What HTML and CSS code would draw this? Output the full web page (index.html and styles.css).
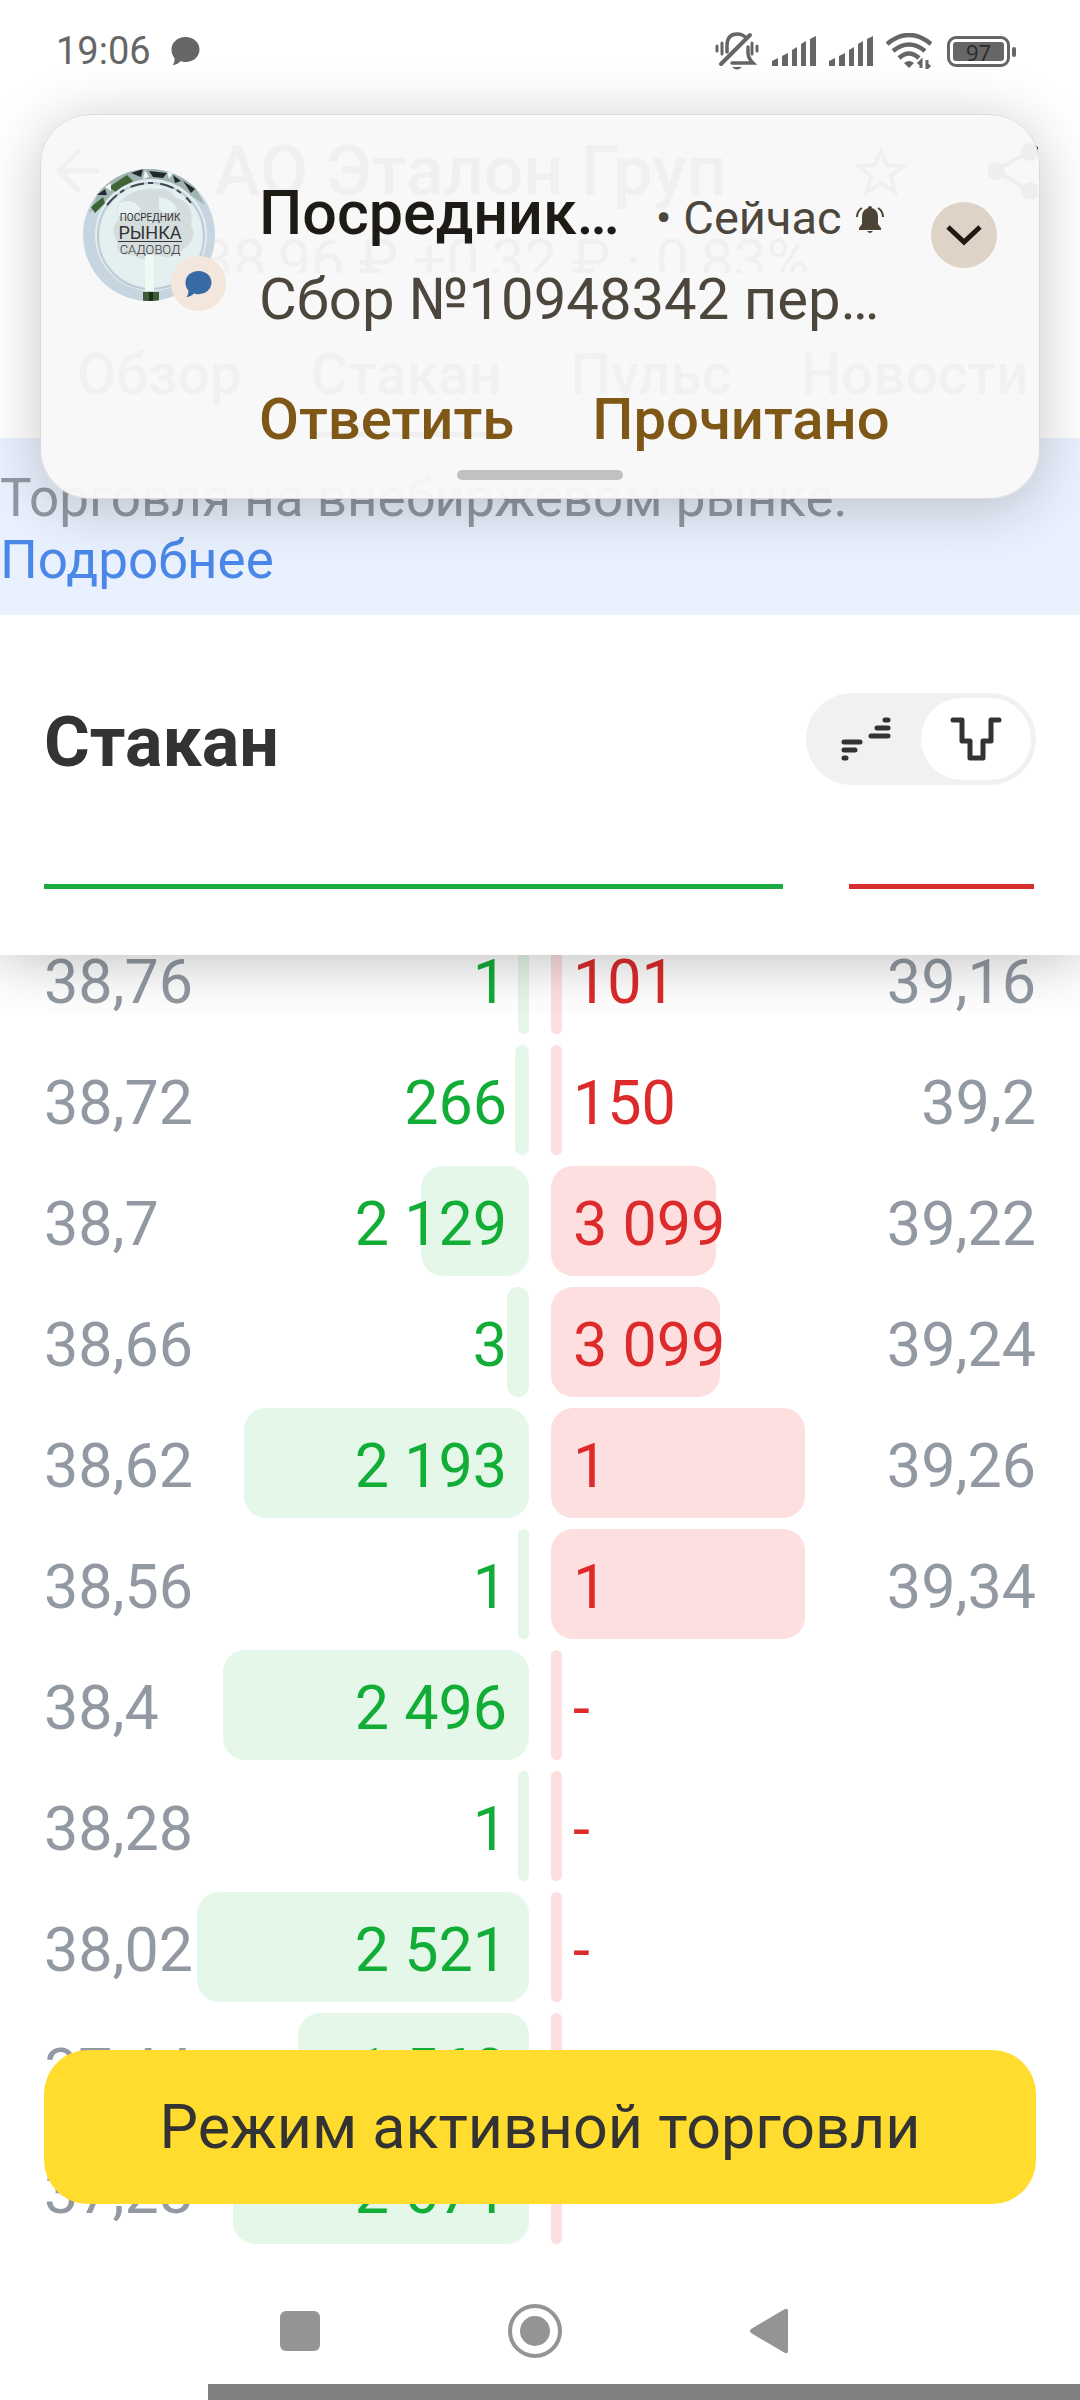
FILE: index.html
```html
<!DOCTYPE html>
<html lang="ru">
<head>
    <meta charset="UTF-8">
    <meta name="viewport" content="width=device-width, initial-scale=1.0">
    <title>Стакан</title>
    <link rel="stylesheet" href="styles.css">
</head>
<body>
    <div class="status-bar">
        <div class="status-left">
            <span>19:06</span>
            <svg width="29" height="28" viewBox="0 0 29 28"><path fill="#666" d="M14.5 0C22.5 0 28.5 5.5 28.5 12.5S22.5 25 14.5 25C12.5 25 11 24.8 9.5 24.2C7.5 26.5 4.5 28 1.5 28C3.2 26 3.8 24 3.5 21C1.5 19 .5 16 .5 12.5C.5 5.5 6.5 0 14.5 0Z"/></svg>
        </div>
        <div class="status-right">
            <svg width="44" height="39" viewBox="0 0 44 39" fill="none" stroke="#666" stroke-width="3.5" stroke-linecap="round">
                <path d="M12 20V14Q12 2 22 2Q28 2 31 6M33 15V21Q33 26 38 31H17"/>
                <path d="M6 32L35 3" stroke-width="4"/>
                <path d="M2 14V19M7 11V22M37 11V22M42 14V19" stroke-width="3"/>
                <path d="M17 35Q22 40 27 35Z" fill="#666" stroke="none"/>
            </svg>
            <svg width="44" height="30" viewBox="0 0 44 30" fill="#666"><path d="M0 25L6 22V30H0ZM10 20L16 17V30H10ZM20 14L25 11V30H20ZM29 8L34 5V30H29ZM38 3L44 0V30H38Z"/></svg>
            <svg width="44" height="30" viewBox="0 0 44 30" fill="#666"><path d="M0 25L6 22V30H0ZM10 20L16 17V30H10ZM20 14L25 11V30H20ZM29 8L34 5V30H29ZM38 3L44 0V30H38Z"/></svg>
            <svg width="46" height="36" viewBox="0 0 46 36" fill="none" stroke="#666" stroke-width="4.5">
                <path d="M1 11Q23 -7 45 11M7 18Q23 5 39 18M13 25Q23 16 33 25"/>
                <path d="M18 30Q23 26 28 30L23 35Z" fill="#666" stroke="none"/>
                <path d="M35 35V28L32 31M41 27V35L44 32" stroke-width="3"/>
            </svg>
            <div class="battery"><span>97</span></div>
        </div>
    </div>

    <header class="app-header">
        <div class="title-row">
            <svg width="44" height="44" viewBox="0 0 44 44" fill="none" stroke="#333" stroke-width="5" stroke-linecap="round" stroke-linejoin="round"><path d="M41 22H3M22 3L3 22L22 41"/></svg>
            <h1>АО Эталон Груп</h1>
            <svg class="star" width="54" height="50" viewBox="0 0 54 50" fill="none" stroke="#333" stroke-width="4"><path d="M27 5L33 19L49 20L37 30L41 46L27 37L13 46L17 30L5 20L21 19Z"/></svg>
            <svg width="50" height="56" viewBox="0 0 50 56" fill="#111" stroke="#111" stroke-width="4"><path d="M42 8L8 28L42 48" fill="none"/><circle cx="42" cy="9" r="7"/><circle cx="8" cy="28" r="7"/><circle cx="42" cy="48" r="7"/></svg>
        </div>
        <div class="quote">38,96 ₽ +0,32 ₽ · 0,83%</div>
        <nav class="tabs">
            <a href="#">Обзор</a>
            <a href="#" class="active">Стакан</a>
            <a href="#">Пульс</a>
            <a href="#">Новости</a>
        </nav>
    </header>

    <div class="banner">
        Торговля на внебиржевом рынке.<br>
        <a href="#">Подробнее</a>
    </div>

    <section class="book-header">
        <div class="book-title">
            <h2>Стакан</h2>
            <div class="switch">
                <button aria-label="Список">
                    <svg width="50" height="44" viewBox="0 0 50 44" fill="none" stroke="#333" stroke-width="5" stroke-linecap="round"><path d="M44 3H47M36 11H47M30 19H47M3 25H19M3 33H14M3 41H5"/></svg>
                </button>
                <button class="selected" aria-label="Стакан">
                    <svg width="52" height="44" viewBox="0 0 52 44" fill="none" stroke="#333" stroke-width="5" stroke-linecap="round" stroke-linejoin="round"><path d="M3 3H12V24H20V41H33V24H41V3H49"/></svg>
                </button>
            </div>
        </div>
        <div class="ratio">
            <div class="buy"></div>
            <div class="sell"></div>
        </div>
    </section>

    <main class="book">
        <table>
            <tbody id="levels"></tbody>
        </table>
        <div class="action">
            <button>Режим активной торговли</button>
        </div>
    </main>

    <footer class="nav-bar">
        <button aria-label="Недавние"><svg width="40" height="40" viewBox="0 0 40 40"><rect width="40" height="40" rx="6" fill="#949494"/></svg></button>
        <button aria-label="Домой"><svg width="54" height="54" viewBox="0 0 54 54"><circle cx="27" cy="27" r="25" fill="none" stroke="#949494" stroke-width="4"/><circle cx="27" cy="27" r="15" fill="#949494"/></svg></button>
        <button aria-label="Назад"><svg width="38" height="46" viewBox="0 0 38 46"><path d="M35 1Q38 0 38 3V43Q38 46 35 45L1 25Q-1 23 1 21Z" fill="#949494"/></svg></button>
    </footer>
    <div class="bottom-strip"></div>

    <div class="notification">
        <div class="avatar">
            <svg width="132" height="132" viewBox="0 0 132 132">
                <defs><clipPath id="round"><circle cx="66" cy="66" r="66"/></clipPath></defs>
                <g clip-path="url(#round)">
                    <rect width="132" height="132" fill="#c6d5e0"/>
                    <path d="M6 44L16 22L34 6L60 -2L92 2L112 18L122 36L104 24L84 14L58 11L36 18L22 32Z" fill="#9fb4ae"/>
                    <path d="M26 18L44 6L50 12L34 24ZM8 38L20 28L22 34L12 44Z" fill="#3e6334"/>
                    <path d="M48 4L60 0L58 8ZM66 2L84 4L80 9L70 8ZM90 6L98 12L92 14ZM14 26L22 20L24 26ZM100 12L112 20L108 24Z" fill="#23282f"/>
                    <path d="M62 1L66 8L60 10ZM84 2L90 4L86 10ZM22 18L28 14L28 22Z" fill="#eef5f7"/>
                    <circle cx="68" cy="66" r="56" fill="#e2edf0"/>
                    <circle cx="68" cy="67" r="53" fill="none" stroke="#b9ccd4" stroke-width="2"/>
                    <path d="M24 36Q42 14 68 14Q92 14 108 34" fill="none" stroke="#43474e" stroke-width="2" stroke-dasharray="14 4 5 7"/>
                    <circle cx="68" cy="67" r="50" fill="#e4f0f0"/>
                    <path d="M40 30Q54 18 72 20Q86 18 92 28Q112 34 108 56Q116 70 98 82Q88 92 76 86Q60 94 50 86Q32 88 34 72Q26 60 36 50Q30 38 40 30Z" fill="#d5dcde"/>
                    <path d="M36 34Q50 28 58 40Q48 52 34 46ZM76 28Q90 30 94 40Q84 48 76 40Z" fill="#e6f2f1"/>
                    <rect x="62" y="86" width="9" height="36" fill="#effaf4"/>
                    <path d="M60 123H76V132H60Z" fill="#3f5b35"/>
                    <path d="M66 123H70V132H66Z" fill="#1d2a20"/>
                </g>
            </svg>
            <div class="logo-text">
                <span>ПОСРЕДНИК</span>
                <strong>РЫНКА</strong>
                <em>САДОВОД</em>
            </div>
            <div class="badge">
                <svg width="27" height="26" viewBox="0 0 29 28"><path fill="#386ba5" d="M14.5 0C22.5 0 28.5 5.5 28.5 12.5S22.5 25 14.5 25C12.5 25 11 24.8 9.5 24.2C7.5 26.5 4.5 28 1.5 28C3.2 26 3.8 24 3.5 21C1.5 19 .5 16 .5 12.5C.5 5.5 6.5 0 14.5 0Z"/></svg>
            </div>
        </div>
        <div class="message">
            <div class="sender">
                <strong>Посредник…</strong>
                <span>• Сейчас</span>
                <svg width="28" height="28" viewBox="0 0 28 28" fill="#4d4337"><path d="M14 0Q16 0 16 2Q22 4 22 11V18L25 22V24H3V22L6 18V11Q6 4 12 2Q12 0 14 0ZM11 25H17Q14 29 11 25Z"/><path d="M1 11Q1 5 6 2M27 11Q27 5 22 2" fill="none" stroke="#4d4337" stroke-width="2"/></svg>
            </div>
            <p>Сбор №10948342 пер…</p>
            <div class="reply">
                <button>Ответить</button>
                <button>Прочитано</button>
            </div>
        </div>
        <button class="expand" aria-label="Развернуть">
            <svg width="36" height="22" viewBox="0 0 36 22" fill="none" stroke="#211a12" stroke-width="5"><path d="M2 3L18 18L34 3"/></svg>
        </button>
        <div class="handle"></div>
    </div>

    <script src="book.js"></script>
</body>
</html>
```
FILE: styles.css
```css
* {
    box-sizing: border-box;
}

body {
    margin: 0;
    min-height: 100vh;
    position: relative;
    display: flex;
    flex-direction: column;
    overflow-x: hidden;
    background-color: #fff;
    color: #333;
    font-family: Roboto, 'Noto Sans', sans-serif;
}

svg {
    display: block;
    flex-shrink: 0;
}

button {
    border: none;
    padding: 0;
    background: none;
    font-family: inherit;
    cursor: pointer;
}

a {
    text-decoration: none;
}

/* status bar */
.status-bar {
    display: flex;
    justify-content: space-between;
    align-items: center;
    height: 102px;
    padding: 0 64px 0 56px;
    color: #666;
    font-size: 38px;
}

.status-left,
.status-right {
    display: flex;
    align-items: center;
}

.status-left {
    gap: 20px;
}

.status-right {
    gap: 13px;
}

.battery {
    position: relative;
    width: 63px;
    height: 31px;
    margin: 0 6px 0 2px;
    padding: 3px;
    border: 3px solid #666;
    border-radius: 9px;
}

.battery::after {
    content: '';
    position: absolute;
    top: 8px;
    right: -9px;
    width: 4px;
    height: 10px;
    border-radius: 2px;
    background-color: #666;
}

.battery span {
    display: block;
    height: 19px;
    border-radius: 3px;
    background-color: #666;
    color: #2a2a2a;
    font-family: 'Open Sans', sans-serif;
    font-size: 22px;
    line-height: 20px;
    text-align: center;
}

/* app header */
.app-header {
    height: 336px;
    padding-top: 24px;
}

.title-row {
    display: flex;
    align-items: center;
    height: 90px;
    padding: 0 42px 0 56px;
}

.title-row h1 {
    flex: 1;
    margin: 0 0 0 114px;
    font-size: 70px;
    font-weight: 500;
    line-height: 90px;
}

.star {
    margin-right: 80px;
}

.quote {
    height: 57px;
    padding-left: 200px;
    overflow: hidden;
    font-size: 59px;
    line-height: 90px;
}

.tabs {
    display: flex;
    gap: 69px;
    margin-top: 60px;
    padding-left: 77px;
}

.tabs a {
    height: 104px;
    color: #555;
    font-size: 57px;
    font-weight: 500;
    line-height: 84px;
}

.tabs .active {
    border-bottom: 5px solid #333;
}

/* banner */
.banner {
    height: 177px;
    padding-top: 29px;
    background-color: #eaf1fe;
    color: #9299a2;
    font-size: 53px;
    line-height: 62px;
}

.banner a {
    color: #4a87e8;
}

/* order book */
.book-header {
    position: relative;
    z-index: 1;
    height: 340px;
    padding: 78px 44px 0;
    background-color: #fff;
    box-shadow: 0 0 60px rgba(0, 0, 0, 0.3);
    clip-path: inset(0 0 -60px 0);
}

.book-title {
    display: flex;
    justify-content: space-between;
    align-items: center;
}

.book-title h2 {
    margin: 0;
    padding-top: 6px;
    font-size: 70px;
    font-weight: 700;
    line-height: 86px;
}

.switch {
    display: flex;
    width: 230px;
    height: 92px;
    padding: 5px;
    border-radius: 46px;
    background-color: #eff1f2;
}

.switch button {
    display: flex;
    flex: 1;
    align-items: center;
    justify-content: center;
    border-radius: 41px;
}

.switch .selected {
    background-color: #fff;
}

.ratio {
    display: flex;
    gap: 66px;
    margin: 99px 2px 0 0;
}

.ratio div {
    height: 5px;
}

.buy {
    flex: 4;
    background-color: #1daa40;
}

.sell {
    flex: 1;
    background-color: #d62e2f;
}

.book {
    position: relative;
    margin-top: -31px;
    padding: 0 44px;
}

.book table {
    width: 100%;
    table-layout: fixed;
    border-collapse: collapse;
}

.book td {
    height: 121px;
    padding: 5px 0 0;
    color: #9299a2;
    font-size: 61px;
    line-height: 106px;
    vertical-align: top;
}

.book .price {
    width: 153px;
}

.book .ask-price {
    text-align: right;
}

.book .bid,
.book .ask {
    position: relative;
}

.book .bid {
    padding-right: 33px;
    color: #12ad37;
    text-align: right;
}

.book .ask {
    padding-left: 33px;
    color: #dd2a2a;
}

.bar {
    position: absolute;
    top: 0;
    z-index: -1;
    height: 110px;
    min-width: 11px;
    border-radius: 22px;
}

.bid .bar {
    right: 11px;
    background-color: #e4f7e9;
}

.ask .bar {
    left: 11px;
    background-color: #fddfe0;
}

.action {
    position: absolute;
    right: 44px;
    bottom: 51px;
    left: 44px;
}

.action button {
    width: 100%;
    height: 154px;
    border-radius: 44px;
    background-color: #ffdc2d;
    color: #333;
    font-size: 61px;
}

/* system navigation */
.nav-bar {
    display: flex;
    justify-content: center;
    align-items: center;
    gap: 188px;
    height: 106px;
    margin-top: auto;
    padding-right: 12px;
}

.bottom-strip {
    height: 16px;
    margin-left: 208px;
    background-color: #808080;
}

/* notification */
.notification {
    position: absolute;
    z-index: 2;
    top: 114px;
    right: 40px;
    left: 40px;
    display: flex;
    align-items: flex-start;
    height: 385px;
    padding: 54px 42px 0;
    border: 1px solid #dcdcdc;
    border-radius: 50px;
    background-color: rgba(248, 248, 248, 0.96);
    box-shadow: 0 8px 60px rgba(0, 0, 0, 0.22);
}

.avatar {
    position: relative;
    width: 132px;
    height: 132px;
}

.logo-text {
    position: absolute;
    top: 43px;
    right: 0;
    left: 2px;
    display: flex;
    flex-direction: column;
    align-items: center;
    color: #333;
}

.logo-text span {
    font-size: 10px;
    line-height: 12px;
}

.logo-text strong {
    border-bottom: 1px solid #333;
    font-size: 18px;
    font-weight: 400;
    line-height: 17px;
}

.logo-text em {
    font-size: 13px;
    font-style: normal;
    font-weight: 300;
    line-height: 15px;
}

.badge {
    position: absolute;
    right: -11px;
    bottom: -10px;
    display: flex;
    align-items: center;
    justify-content: center;
    width: 55px;
    height: 55px;
    border-radius: 50%;
    background-color: #f3e6dc;
}

.message {
    flex: 1;
    margin-left: 44px;
}

.sender {
    display: flex;
    align-items: baseline;
    height: 88px;
    color: #4d463c;
    line-height: 88px;
}

.sender strong {
    margin-right: 36px;
    color: #1e1b16;
    font-size: 61px;
    font-weight: 500;
}

.sender span {
    margin-right: 14px;
    font-size: 47px;
}

.message p {
    margin: 0;
    color: #4d463c;
    font-size: 58px;
    line-height: 84px;
}

.reply {
    display: flex;
    gap: 78px;
    margin-top: 38px;
}

.reply button {
    color: #7f5716;
    font-size: 58px;
    font-weight: 500;
    line-height: 80px;
}

.expand {
    display: flex;
    align-items: center;
    justify-content: center;
    width: 66px;
    height: 66px;
    margin-top: 33px;
    border-radius: 50%;
    background-color: #dfd3c8;
}

.handle {
    position: absolute;
    bottom: 18px;
    left: calc(50% - 83px);
    width: 166px;
    height: 10px;
    border-radius: 5px;
    background-color: #c0c2c1;
}
```
FILE: book.js
```js
// [bid price, bid size, bid bar %, ask size, ask bar %, ask price]
const levels = [
    ['38,76', '1', 3, '101', 3, '39,16'],
    ['38,72', '266', 4, '150', 3, '39,2'],
    ['38,7', '2 129', 31.5, '3 099', 48, '39,22'],
    ['38,66', '3', 6.4, '3 099', 49.2, '39,24'],
    ['38,62', '2 193', 83, '1', 74, '39,26'],
    ['38,56', '1', 3, '1', 74, '39,34'],
    ['38,4', '2 496', 89.3, '-', 3, ''],
    ['38,28', '1', 3, '-', 3, ''],
    ['38,02', '2 521', 96.8, '-', 3, ''],
    ['37,44', '1 568', 67.3, '-', 3, ''],
    ['37,28', '2 671', 86.3, '-', 3, '']
];

document.getElementById('levels').innerHTML = levels.map(row => `
    <tr>
        <td class="price">${row[0]}</td>
        <td class="bid"><div class="bar" style="width: ${row[2]}%"></div>${row[1]}</td>
        <td class="ask"><div class="bar" style="width: ${row[4]}%"></div>${row[3]}</td>
        <td class="price ask-price">${row[5]}</td>
    </tr>
`).join('');
```
